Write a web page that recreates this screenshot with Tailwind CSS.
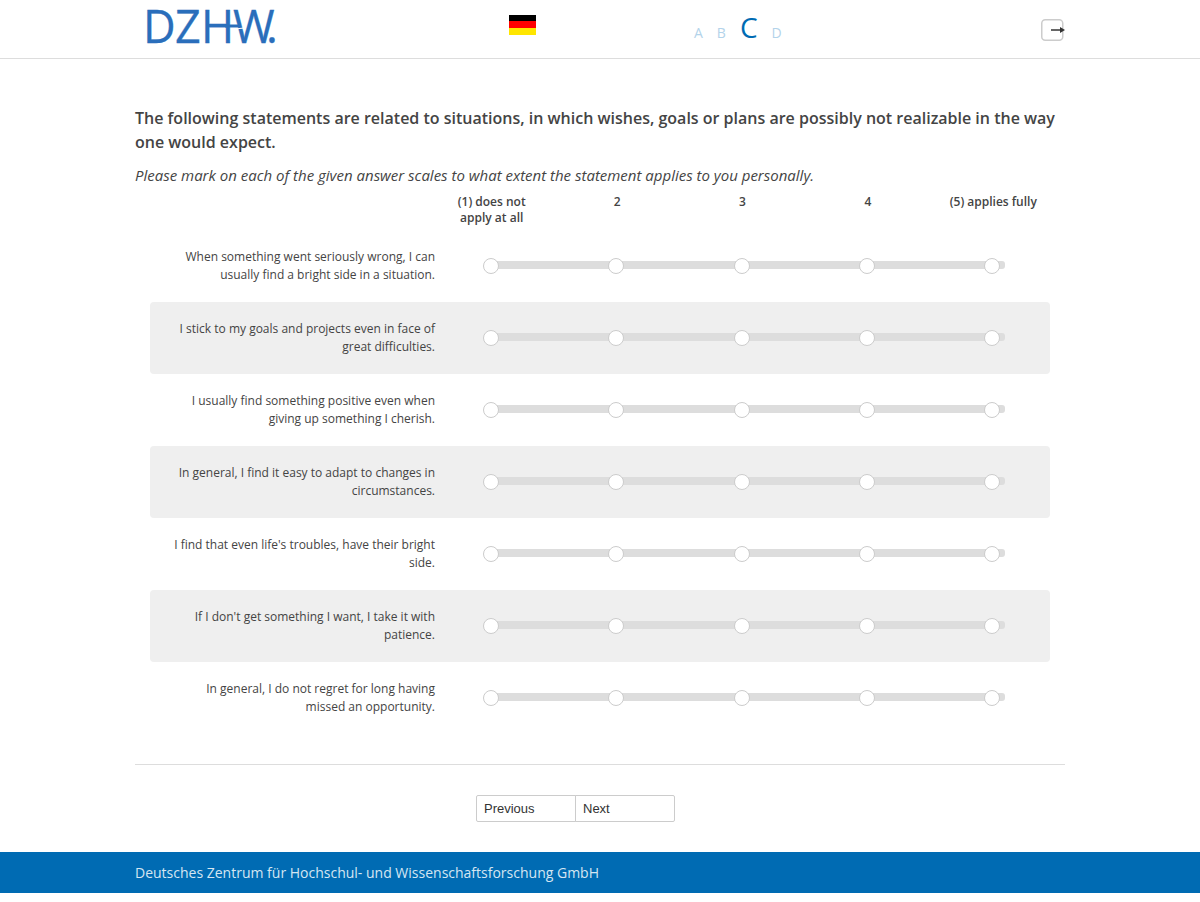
<!DOCTYPE html>
<html lang="en">
<head>
    <meta charset="UTF-8">
    <meta name="viewport" content="width=device-width, initial-scale=1.0">
    <title>DZHW Survey</title>
    <script src="https://cdn.jsdelivr.net/npm/@tailwindcss/browser@4"></script>
</head>
<body class="bg-white text-[#444] font-['Open_Sans',sans-serif]">

<header class="border-b border-[#ddd]">
    <div class="max-w-[930px] h-[58px] mx-auto grid grid-cols-[374px_185px_1fr_auto]">
        <a href="#" aria-label="DZHW">
            <svg class="overflow-visible" width="150" height="58" viewBox="0 0 150 58" fill="#2a6ebb" stroke="#2a6ebb" stroke-width="0.3" font-family="Open Sans" font-size="45">
                <text y="43" x="8 40 66 98 131">DZHW.</text>
                <path d="M90 26h15" stroke-width="3"/>
                <path d="M100 29l9-1" stroke="#fff" stroke-width="1"/>
            </svg>
        </a>
        <a href="#" aria-label="Deutsch" class="mt-[15px]">
            <svg width="27" height="20" viewBox="0 0 27 20">
                <rect width="27" height="7" fill="#000"/>
                <rect y="6" width="27" height="8" fill="#f00"/>
                <rect y="13" width="27" height="7" fill="#ffe600"/>
            </svg>
        </a>
        <ol class="flex items-baseline gap-[14px] mt-[7px] text-sm text-[#b3d3ea]">
            <li>A</li>
            <li>B</li>
            <li class="text-[28px] text-[#006bb3]">C</li>
            <li>D</li>
        </ol>
        <button type="button" aria-label="Exit" class="self-start mt-[18px]">
            <svg width="24" height="24" viewBox="0 0 24 24">
                <rect x="0.75" y="1.75" width="21" height="20.5" rx="3.5" fill="none" stroke="#ccc" stroke-width="1.5"/>
                <path d="M10 12h10" stroke="#333" stroke-width="1.5"/>
                <path d="M19 9l5 3-5 3z" fill="#333"/>
            </svg>
        </button>
    </div>
</header>

<main class="max-w-[930px] mx-auto pt-[47px]">
    <h1 class="text-base leading-6 font-semibold">The following statements are related to situations, in which wishes, goals or plans are possibly not realizable in the way one would expect.</h1>
    <p class="mt-[10px] text-[15px] leading-[22px] italic">Please mark on each of the given answer scales to what extent the statement applies to you personally.</p>

    <form>
        <div class="mt-2 mb-1 pl-[294px] pr-[9px] grid grid-cols-5 text-xs leading-4 font-semibold text-center">
            <span class="px-4">(1) does not apply at all</span>
            <span>2</span>
            <span>3</span>
            <span>4</span>
            <span>(5) applies fully</span>
        </div>

        <div id="items" class="px-[15px]"></div>

        <template id="item">
            <div role="radiogroup" class="flex items-center h-[72px] rounded even:bg-[#efefef]">
                <p class="w-[285px] pl-5 text-xs leading-[18px] text-right"></p>
                <div class="relative flex-1 flex justify-between ml-12 mr-[45px] pr-[5px]">
                    <span class="absolute left-1 right-0 top-[3px] h-2 rounded-[3px] bg-[#ddd]"></span>
                    <input type="radio" value="1" aria-label="(1) does not apply at all" class="relative appearance-none size-4 rounded-full border border-[#ccc] bg-white checked:bg-[#006bb3]">
                    <input type="radio" value="2" aria-label="2" class="relative appearance-none size-4 rounded-full border border-[#ccc] bg-white checked:bg-[#006bb3]">
                    <input type="radio" value="3" aria-label="3" class="relative appearance-none size-4 rounded-full border border-[#ccc] bg-white checked:bg-[#006bb3]">
                    <input type="radio" value="4" aria-label="4" class="relative appearance-none size-4 rounded-full border border-[#ccc] bg-white checked:bg-[#006bb3]">
                    <input type="radio" value="5" aria-label="(5) applies fully" class="relative appearance-none size-4 rounded-full border border-[#ccc] bg-white checked:bg-[#006bb3]">
                </div>
            </div>
        </template>

        <div class="mt-[30px] border-t border-[#ddd] pt-[30px] pb-[30px] pl-[341px] flex text-[13px] font-['Liberation_Sans',sans-serif] text-[#333]">
            <button type="button" class="w-[100px] h-[27px] px-[7px] text-left border border-[#ccc] rounded-l-xs">Previous</button>
            <button type="submit" class="w-[100px] h-[27px] px-[7px] -ml-px text-left border border-[#ccc] rounded-r-xs">Next</button>
        </div>
    </form>
</main>

<footer class="bg-[#006bb3] text-[#d5e6f2]">
    <p class="max-w-[930px] mx-auto py-[10px] text-sm leading-[21px]">Deutsches Zentrum für Hochschul- und Wissenschaftsforschung GmbH</p>
</footer>

<script>
    const statements = [
        'When something went seriously wrong, I can usually find a bright side in a situation.',
        'I stick to my goals and projects even in face of great difficulties.',
        'I usually find something positive even when giving up something I cherish.',
        'In general, I find it easy to adapt to changes in circumstances.',
        "I find that even life's troubles, have their bright side.",
        "If I don't get something I want, I take it with patience.",
        'In general, I do not regret for long having missed an opportunity.'
    ];
    const items = document.getElementById('items');
    const template = document.getElementById('item');

    statements.forEach((text, i) => {
        const row = template.content.cloneNode(true);
        const label = row.querySelector('p');
        label.textContent = text;
        label.id = `statement-${i}`;
        row.querySelector('[role=radiogroup]').setAttribute('aria-labelledby', label.id);
        row.querySelectorAll('input').forEach(input => input.name = `item-${i}`);
        items.appendChild(row);
    });
</script>
</body>
</html>
